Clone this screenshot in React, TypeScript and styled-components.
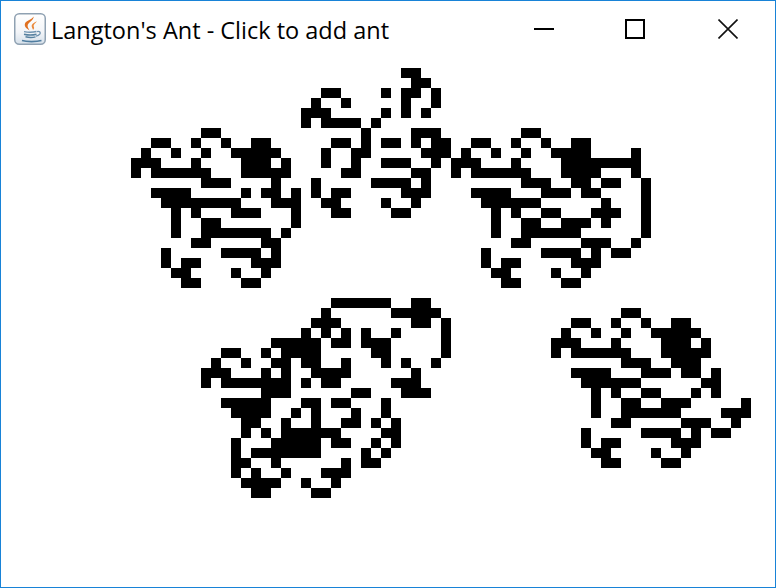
import React from "react";
import styled, { createGlobalStyle } from "styled-components";

const Global = createGlobalStyle`
  html, body { margin: 0; padding: 0; background: #fff; }
  #root { width: 776px; height: 588px; overflow: hidden; }
`;

const Frame = styled.div`
  box-sizing: border-box;
  width: 776px;
  height: 588px;
  border: 1px solid #1883d7;
  background: #fff;
  display: flex;
  flex-direction: column;
`;

const TitleBar = styled.header`
  flex: 0 0 59px;
  display: flex;
  align-items: center;
  padding-left: 13px;
`;

const AppIcon = styled.svg`
  width: 32px;
  height: 32px;
  flex: none;
  display: block;
  margin-bottom: 3px;
`;

const Title = styled.h1`
  margin: 0 0 2px 5px;
  flex: 1;
  font: 400 23.5px/32px "Open Sans", sans-serif;
  color: #000;
  white-space: nowrap;
`;

const Controls = styled.div`
  display: flex;
  align-self: flex-start;
`;

const ControlButton = styled.div<{ $width: number }>`
  width: ${(p) => p.$width}px;
  height: 56px;
  display: flex;
  align-items: center;
  justify-content: center;
`;

const Glyph = styled.svg`
  width: 20px;
  height: 20px;
  display: block;
`;

const Canvas = styled.main`
  flex: 1;
  min-height: 0;
`;

const Board = styled.svg`
  display: block;
  width: 774px;
  height: 527px;
  shape-rendering: crispEdges;
`;

const CELLS = `
6:40-41
7:41-42
8:32-33 38 40-41 43
9:31 34 40 43
10:30-32 38 40 42
11:30 32-35 37
12:20-21 36 41-43 52-53
13:15-16 19 22 25-26 33-34 36 38-39 41 43-44 47-48 51 54 57-58
14:14 17 20 23-27 32 35-36 42-44 46 49 52 55-58 63
15:13-15 19 24-26 28 32 35 38-40 43 45-47 51 56-63
16:13 15-20 24-28 34-35 41-42 45 47-52 56-59 63
17:20-22 27 31 37-40 42 52-54 57-58 60-61 64
18:15-18 24 26-27 29 31 33-34 40-42 47-50 54-56 58-59 64
19:16-23 27-29 32-33 38 41 48-53 60 64
20:17 19 23-25 29 33-34 39-40 49 51 54-55 59-61 64
21:17 20-21 29 49 52-53 56-58 60 64
22:17 20-26 28 49 52-57 64
23:19-20 26-27 51-52 58-60 63
24:16 22-25 27 48 54-57 59 61-62
25:16 18-19 25-27 48 50-51 57-59
26:17-18 23 26 49-50 55 58
27:18-19 24-25 50-51 56-57
29:33-38 41-42
30:32 39-43 62-63
31:31-33 41-42 44 57-58 61 64 67-68
32:30 32 34 36 39 44 56 59 62 65-69
33:27-31 33-34 36-38 44 55-57 61 66-68 70
34:22-23 26 28-31 37-38 44 55 57-62 66-70
35:21 24 27-28 30-31 34 38 40 43 62-64 67-69
36:20-22 26 28 31-34 41 57-60 64-66 68-69 71
37:20 22-28 30 32-33 39-41 58-63 70-71
38:26-28 35-36 40-42 59 61 64-65 69 71
39:22-26 30-31 33-34 38 59 62-63 66-68 74
40:23-26 29 31 35 38 59 62-67 72-74
41:24-25 28 31 34-35 37 39 61-62 68-70 73
42:24 26 28-33 38-39 58 64-67 69 71-72
43:23 27-31 33-34 37 39 58 60-61 67-69
44:23 25-31 36 38 59-60 65 68
45:23-24 27 34 36-37 60-61 66-67
46:23 25 28 32-34
47:24-27 30 33
48:25-26 31-32
`;

type Run = { row: number; from: number; to: number };

const runs: Run[] = CELLS.trim()
  .split("\n")
  .flatMap((line) => {
    const [row, spans] = line.split(":");
    return spans.split(" ").map((span) => {
      const [a, b] = span.split("-").map(Number);
      return { row: Number(row), from: a, to: b ?? a };
    });
  });

const JavaIcon = () => (
  <AppIcon viewBox="0 0 32 32">
    <defs>
      <linearGradient id="tile" x1="0" y1="0" x2="0" y2="1">
        <stop offset="0" stopColor="#ffffff" />
        <stop offset="0.6" stopColor="#f3f5f8" />
        <stop offset="1" stopColor="#d5e0ea" />
      </linearGradient>
    </defs>
    <rect x="0.75" y="0.75" width="30.5" height="30.5" rx="4.5" fill="url(#tile)" stroke="#8fa1b2" strokeWidth="1.5" />
    <path d="M19.5 3.5c.8 3.4-5 5.6-5.8 8.6-.4 1.9.8 3.6 1.8 5.3-3.4-1.9-5.6-4.2-4.4-7.1 1.1-2.8 7.2-3.6 8.4-6.8z" fill="#e0701f" />
    <path d="M23 8.2c-3 1.4-5.8 3-5.2 5.6.3 1.3 1.1 2 1.2 3.2 1.4-1.2 1.3-2.4.7-3.5-.6-1.7 1.6-3.3 3.3-5.3z" fill="#ea8a3d" />
    <path d="M10 18.6c3.5.8 9 .8 12.5-.1" fill="none" stroke="#6f93b0" strokeWidth="1.4" />
    <path d="M10 21.2c3 .8 9.5.8 12.5 0" fill="none" stroke="#56809f" strokeWidth="1.4" />
    <path d="M11.5 23.8c3 .7 7.6.7 10 0" fill="none" stroke="#56809f" strokeWidth="1.4" />
    <path d="M23 18.6c2.8-.8 3.9 1 2.8 2.6-.9 1.1-2.4 1.7-3.9 2" fill="none" stroke="#6f93b0" strokeWidth="1.3" />
    <path d="M8 27.6c4.5 1.4 14.5 1.4 19.5 0" fill="none" stroke="#4f7da0" strokeWidth="1.6" />
  </AppIcon>
);

export default function App() {
  return (
    <>
      <Global />
      <Frame>
        <TitleBar>
          <JavaIcon />
          <Title>Langton's Ant - Click to add ant</Title>
          <Controls>
            <ControlButton $width={90}>
              <Glyph viewBox="0 0 20 20">
                <rect x="0" y="9" width="20" height="2" fill="#000" />
              </Glyph>
            </ControlButton>
            <ControlButton $width={92}>
              <Glyph viewBox="0 0 20 20">
                <rect x="1" y="1" width="18" height="18" fill="none" stroke="#000" strokeWidth="2" />
              </Glyph>
            </ControlButton>
            <ControlButton $width={94}>
              <Glyph viewBox="0 0 20 20">
                <path d="M0.5 0.5L19.5 19.5M19.5 0.5L0.5 19.5" fill="none" stroke="#111" strokeWidth="1.6" />
              </Glyph>
            </ControlButton>
          </Controls>
        </TitleBar>
        <Canvas>
          <Board viewBox="0 0 774 527">
            {runs.map((r) => (
              <rect
                key={`${r.row}-${r.from}`}
                x={r.from * 10}
                y={r.row * 10 + 8 - 60}
                width={(r.to - r.from + 1) * 10}
                height={10}
                fill="#000"
              />
            ))}
          </Board>
        </Canvas>
      </Frame>
    </>
  );
}
